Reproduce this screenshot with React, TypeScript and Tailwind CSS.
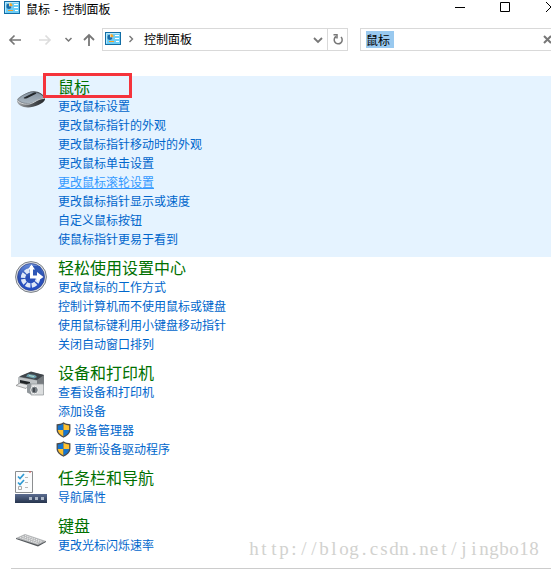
import React from 'react';

function PanelIcon() {
  return (
    <svg className="block shrink-0" width="17" height="13" viewBox="0 0 17 13">
      <rect x=".5" y=".5" width="15" height="12" fill="#6ccdf5" stroke="#126da5" />
      <path d="M1.5 11.5v-10h13" fill="none" stroke="#b9e9fc" />
      <circle cx="5.3" cy="5" r="2.8" fill="#fff" />
      <path d="M5 2.6A2.7 2.7 0 1 0 7.7 5.3H5z" fill="#176ca9" />
      <path d="M5.5 2v3h3a3 3 0 0 0-3-3z" fill="#f4a72e" />
      <path d="M10 3.5h4M10 6.5h4M11 9.5h3" stroke="#fff" />
      <path d="M4 9.5h5" stroke="#f2a12b" />
    </svg>
  );
}

function MouseIcon() {
  return (
    <svg width="32" height="32" viewBox="0 0 32 32">
      <defs>
        <linearGradient id="mouse" x1=".6" x2=".5" y2="1"><stop stopColor="#8593a1" /><stop offset="1" stopColor="#a9b5bf" /></linearGradient>
        <linearGradient id="mouseSide"><stop stopColor="#a8abae" /><stop offset=".5" stopColor="#55595d" /><stop offset="1" stopColor="#24272a" /></linearGradient>
      </defs>
      <path d="M2 20.500c0-3 5-5 11-8 4-1.700 9-1.700 13 1 3 2 4 4 4 6-1 4-11 8-17 8-6 0-11-3-11-7z" fill="url(#mouseSide)" />
      <path d="M3 19.500c2-3 6-5 11-7 6-1.500 13 1 15.500 5.500-6 0-9 5-15 5.500-5 0-10-1-11.500-4z" fill="url(#mouse)" stroke="#5f6a74" strokeWidth=".5" />
      <path d="M2.500 20.500c3 3.500 8 4 12 3.500 5-1 8-5.500 15-5.500" stroke="#e3e6e8" strokeWidth=".8" fill="none" />
      <path d="M9 17.500l9-4.500c2-.8 4-.5 3 .8l-9 4.400c-2 .7-4 .5-3-.7z" fill="#23272b" />
    </svg>
  );
}

function EaseIcon() {
  return (
    <svg width="32" height="32" viewBox="0 0 32 32">
      <defs>
        <linearGradient id="ease" x2="0" y2="1"><stop stopColor="#6a8fdb" /><stop offset=".5" stopColor="#2a4fb4" /><stop offset="1" stopColor="#2550c8" /></linearGradient>
      </defs>
      <circle cx="16" cy="16" r="15.400" fill="#dfe2e5" stroke="#7b8087" />
      <circle cx="16" cy="16" r="13.500" fill="url(#ease)" stroke="#2c3f87" strokeWidth=".7" />
      <circle cx="15.500" cy="17" r="7.500" fill="none" stroke="#dfe8f7" strokeWidth="4.500" strokeDasharray="4.600 1.290" />
      <path d="M16 17V5h9l3 9z" fill="#2f57b6" />
      <path d="M16.500 5v11h6" fill="none" stroke="#fff" strokeWidth="3" />
      <path d="M13 8.500L16.500 3.500 20 8.500zM22 11l6.500 5-6.500 4.500z" fill="#fff" />
    </svg>
  );
}

function PrinterIcon() {
  return (
    <svg width="32" height="32" viewBox="0 0 32 32">
      <path d="M4 11l12-5 13 3v10l-9 4-16-4z" fill="#777c80" />
      <path d="M4 10.500l12-5 13 3.500-7 5z" fill="#3f454a" />
      <path d="M13 8l7 1 2 2-3 1.500-8-2z" fill="#6c9ead" />
      <path d="M14 9.500l5 1" stroke="#b4dbc4" />
      <path d="M3 11l19 3.500V22L3 18.500z" fill="#bfc3c5" />
      <path d="M5 14l10 2v3.500L5 17.500z" fill="#202427" />
      <path d="M1 19.500L5 17l9 2-3 3.500z" fill="#e5e7e8" stroke="#777" strokeWidth=".6" />
      <path d="M12 18l4-1v11.500l-4-2z" fill="#92989c" />
      <path d="M16 18h12.500v11H16z" fill="#dcdedf" stroke="#8e9396" strokeWidth=".7" />
      <circle cx="19.500" cy="24" r="3.800" fill="#777e83" stroke="#f4f4f4" />
      <path d="M19 22v4" stroke="#33393e" strokeWidth="1.500" />
    </svg>
  );
}

function TaskbarIcon() {
  return (
    <svg width="32" height="32" viewBox="0 0 32 32">
      <defs>
        <linearGradient id="bar" x2="0" y2="1"><stop stopColor="#5c6d91" /><stop offset="1" stopColor="#26344d" /></linearGradient>
      </defs>
      <path d="M.5.5h17v21H.5z" fill="#fbfcfd" stroke="#8c8e90" />
      <path d="M14 1h2" stroke="#e15050" />
      <path d="M3 5.500l2 2L9 3M3 11.500l2 2L9 9" fill="none" stroke="#319bd4" strokeWidth="1.700" />
      <path d="M3.500 15.500h3v3h-3z" fill="none" stroke="#aaa" />
      <path d="M10 6.500h3M10 11.500h3M10 16.500h3" stroke="#b8b8b8" />
      <path d="M0 23h32v9H0z" fill="url(#bar)" />
      <path d="M14 26h3v3h-3zM20 26h3v3h-3zM26 26h3v3h-3z" fill="#aeb9c9" />
    </svg>
  );
}

function KeyboardIcon() {
  return (
    <svg width="32" height="32" viewBox="0 0 32 32">
      <path d="M1 19l9-4 21 7-8 5z" fill="#b3b5b7" />
      <path d="M1 19v1l22 7.500 8-4.500v-1l-8 4z" fill="#54585c" />
      <path d="M5 18.500l18 6M7.500 17.500l18 6M10 16.500l17 6" stroke="#eee" strokeDasharray="1.500 .8" />
    </svg>
  );
}

function Shield() {
  return (
    <svg className="mr-[3px] shrink-0" width="15" height="16" viewBox="0 0 14 15">
      <path d="M7 .2C5 1.700 3 2 .5 2v5.300C.5 11 4 13.300 7 14.800c3-1.500 6.500-3.800 6.500-7.500V2C11 2 9 1.700 7 .2z" fill="#4c4c4c" />
      <path d="M7 1.700C5 2.900 3.500 3.200 1.700 3.200v4.300H7z" fill="#1675cf" />
      <path d="M7 1.700c2 1.200 3.500 1.500 5.300 1.500v4.300H7zM1.700 7.500H7v6C4.500 12.300 2 10.500 1.700 7.500z" fill="#ffc12f" />
      <path d="M7 7.500h5.300c-.3 3-2.800 4.800-5.300 6z" fill="#1675cf" />
    </svg>
  );
}

type Section = { title: string; icon: React.ReactNode; links: string[]; shielded?: string[]; active?: string };

const sections: Section[] = [
  {
    title: '鼠标', icon: <MouseIcon />, active: '更改鼠标滚轮设置',
    links: ['更改鼠标设置', '更改鼠标指针的外观', '更改鼠标指针移动时的外观', '更改鼠标单击设置', '更改鼠标滚轮设置', '更改鼠标指针显示或速度', '自定义鼠标按钮', '使鼠标指针更易于看到'],
  },
  { title: '轻松使用设置中心', icon: <EaseIcon />, links: ['更改鼠标的工作方式', '控制计算机而不使用鼠标或键盘', '使用鼠标键利用小键盘移动指针', '关闭自动窗口排列'] },
  { title: '设备和打印机', icon: <PrinterIcon />, links: ['查看设备和打印机', '添加设备', '设备管理器', '更新设备驱动程序'], shielded: ['设备管理器', '更新设备驱动程序'] },
  { title: '任务栏和导航', icon: <TaskbarIcon />, links: ['导航属性'] },
  { title: '键盘', icon: <KeyboardIcon />, links: ['更改光标闪烁速率'] },
];

const watermark = 'http://blog.csdn.net/jingbo18';

function SectionRow({ section }: { section: Section }) {
  return (
    <section className={`flex pb-[9px] pl-1 ${section.active ? 'bg-[#e5f3ff]' : ''}`}>
      <div className="mr-[11px] h-8 w-8 shrink-0 pt-[4px]">{section.icon}</div>
      <div>
        <h2 className="relative h-5 text-[16px] leading-[20px] text-[#007000]">
          {section.title}
          {section.active && <span className="absolute -left-[15px] -top-[3px] h-[25px] w-[89px] border-[3px] border-[#f5333b]" />}
        </h2>
        {section.links.map((link) => (
          <div key={link} className="flex h-[19px] items-center">
            {section.shielded?.includes(link) && <span className="-ml-[2px] flex"><Shield /></span>}
            <a className={link === section.active ? 'text-[#3399ff] underline underline-offset-1' : 'text-[#0066cc]'}>{link}</a>
          </div>
        ))}
      </div>
    </section>
  );
}

export default function App() {
  return (
    <div className="relative h-[570px] w-[551px] overflow-hidden bg-white font-['Noto_Sans_CJK_SC',sans-serif] text-[12px] leading-[19px] text-black">
      <header className="flex h-[28px] items-start justify-between pl-1">
        <div className="flex items-start">
          <span className="pt-px"><PanelIcon /></span>
          <span className="ml-[5px] leading-[17px] [word-spacing:1.5px]">鼠标 - 控制面板</span>
        </div>
        <svg width="96" height="14" viewBox="455 0 96 14" fill="none" stroke="#000">
          <path d="M455 7.500h10M500.500 2.500h9v9h-9zM546 2l10 10M546 12l10-10" />
        </svg>
      </header>
      <nav className="flex h-[23px]">
        <svg className="shrink-0" width="102" height="23" viewBox="0 28 102 23" fill="none">
          <path d="M21 40H10M14.500 35.500L10 40l4.500 4.500" stroke="#777" strokeWidth="1.700" />
          <path d="M39 40h11M45.500 35.500L50 40l-4.500 4.500" stroke="#ddd" strokeWidth="1.700" />
          <path d="M65.500 38l3 3 3-3" stroke="#777" strokeWidth="1.500" />
          <path d="M89 46V35M84 40l5-5 5 5" stroke="#777" strokeWidth="1.800" />
        </svg>
        <div className="flex w-[246px] shrink-0 border border-[#d9d9d9]">
          <div className="flex flex-1 items-start pl-[2px] pt-[3px]">
            <PanelIcon />
            <svg className="ml-[6px] mt-[3px]" width="6" height="8" fill="none"><path d="M1.500 1l3 3-3 3" stroke="#777" strokeWidth="1.400" /></svg>
            <span className="-mt-[3px] ml-[10px]">控制面板</span>
            <svg className="ml-auto mr-[4px] mt-[5px]" width="10" height="8" fill="none"><path d="M1 1l4 4 4-4" stroke="#777" strokeWidth="1.800" /></svg>
          </div>
          <div className="flex w-[20px] items-center justify-center border-l border-[#d9d9d9]">
            <svg width="12" height="13" viewBox="0 0 12 13" fill="none" stroke="#777" strokeWidth="1.500"><path d="M9 4a4 4 0 1 1-5-.5M1.500 1.800H5V5.500" /></svg>
          </div>
        </div>
        <div className="ml-[12px] flex w-[200px] shrink-0 items-start border border-[#d9d9d9] pl-[5px] pt-[2px]">
          <span className="h-[17px] w-[28px] shrink-0 bg-[#99c9ef] leading-[17px]">鼠标</span>
          <svg className="ml-[149px] mt-[4px] shrink-0" width="9" height="9"><path d="M1 1l7 7M8 1L1 8" stroke="#777" strokeWidth="2" /></svg>
        </div>
      </nav>
      <main className="ml-[11px] mt-[25px]">
        {sections.map((section) => <SectionRow key={section.title} section={section} />)}
        <hr className="mt-[5px] border-[#ccc]" />
      </main>
      <p className="absolute left-[249px] top-[539px] flex font-['Liberation_Serif',serif] text-[19px] leading-[20px] text-[#d2d2cf]">
        {Array.from(watermark, (char, index) => <span key={index} className="w-[10px] text-center">{char}</span>)}
      </p>
    </div>
  );
}
